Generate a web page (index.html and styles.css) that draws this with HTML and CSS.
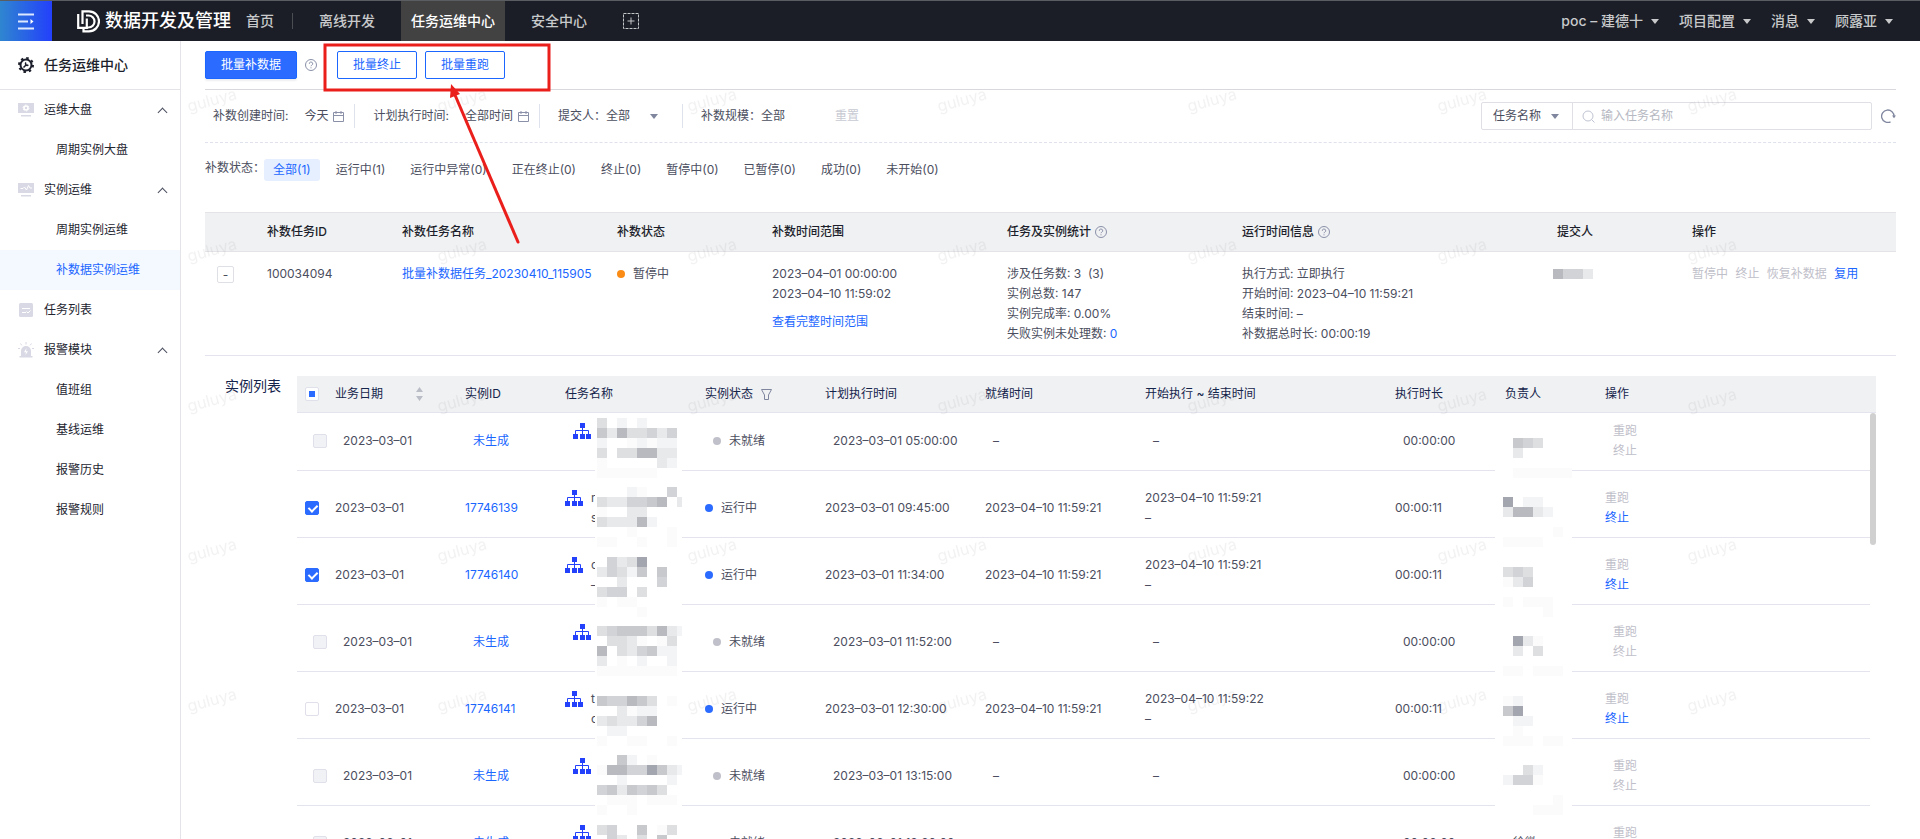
FILE: index.html
```html
<!DOCTYPE html>
<html lang="zh-CN">

<head>
    <meta charset="utf-8">
    <title>任务运维中心</title>
    <link rel="stylesheet" href="styles.css">
</head>

<body>
    <header class="topbar">
        <button class="menu-toggle" aria-label="菜单">
            <svg width="16" height="17" viewBox="0 0 16 17" stroke="#dbe8ff" stroke-width="2">
                <path d="M0 1.5h16M0 8.500h10M0 15.500h16" />
                <path d="M12.500 6l3 2.500-3 2.500z" fill="#fff" stroke="none" />
            </svg>
        </button>
        <div class="brand">
            <svg width="23" height="23" viewBox="0 0 23 23" fill="none" stroke="#fff" stroke-width="2.200">
                <path d="M1.200 4v13.800h8.600V8.500" />
                <path d="M5.500 14V1.300h6.500a10 10 0 0 1 0 20H6.500v-3.500" />
                <path d="M9 5.500h2.500a6 6 0 0 1 0 12H9.500" />
            </svg>
            <span>数据开发及管理</span>
        </div>
        <nav class="topnav">
            <a href="#" class="home">首页</a>
            <a href="#">离线开发</a>
            <a href="#" class="active">任务运维中心</a>
            <a href="#">安全中心</a>
            <button class="add-tab" aria-label="添加">
                <svg width="16" height="16" viewBox="0 0 16 16" fill="none" stroke="#c5c6c8">
                    <rect x="0.500" y="0.500" width="15" height="15" stroke-dasharray="3 1" />
                    <path d="M8 4.500v7M4.500 8h7" />
                </svg>
            </button>
        </nav>
        <div class="user-menu">
            <button>poc – 建德十<i class="caret"></i></button>
            <button>项目配置<i class="caret"></i></button>
            <button>消息<i class="caret"></i></button>
            <button>顾露亚<i class="caret"></i></button>
        </div>
    </header>

    <div class="layout">
        <aside class="sidebar">
            <h1 class="side-title">
                <svg width="16" height="16" viewBox="0 0 16 16" fill="none" stroke="#1c1f2b">
                    <circle cx="8" cy="8" r="5.500" stroke-width="2" />
                    <circle cx="8" cy="8" r="7" stroke-width="2" stroke-dasharray="2.500 3" />
                    <path d="M5.500 10.500l2.500-2.500M8 5.500a1.600 1.600 0 1 0 2.300 2.300" stroke-width="1.500" />
                </svg>
                任务运维中心
            </h1>
            <nav class="side-nav">
                <a href="#" class="group">
                    <svg width="16" height="14" viewBox="0 0 16 14" fill="#d8d9e4">
                        <path d="M0 0h16v10H0zM3 12h10v1.500H3z" />
                        <circle cx="8" cy="5" r="2" fill="none" stroke="#fff" stroke-width="1.600" />
                        <circle cx="8" cy="5" r="3" fill="none" stroke="#fff" stroke-dasharray="1.600 1.540" />
                    </svg>
                    <span>运维大盘</span>
                    <i class="chevron"></i>
                </a>
                <a href="#" class="sub">周期实例大盘</a>
                <a href="#" class="group">
                    <svg width="16" height="14" viewBox="0 0 16 14" fill="#d8d9e4">
                        <path d="M0 0h16v10H0zM3 12h10v1.500H3z" />
                        <path d="M2.500 5.500H5l1.500-1.500 2 3 2-4.500L12 5h2" fill="none" stroke="#fff" />
                    </svg>
                    <span>实例运维</span>
                    <i class="chevron"></i>
                </a>
                <a href="#" class="sub">周期实例运维</a>
                <a href="#" class="sub current">补数据实例运维</a>
                <a href="#" class="group">
                    <svg width="16" height="14" viewBox="0 0 16 14" fill="#d8d9e4">
                        <rect x="1" width="14" height="14" rx="1.500" />
                        <path d="M4 5.500h8M4 9.500h4M8.500 8.500l1.500 1.500 2.500-2.500" fill="none" stroke="#fff" />
                    </svg>
                    <span>任务列表</span>
                </a>
                <a href="#" class="group">
                    <svg width="16" height="16" viewBox="0 0 16 16" fill="#d8d9e4">
                        <path d="M3 14V9a5 5 0 0 1 10 0v5h1.500v1.500h-13V14z" />
                        <path d="M8 0v2.500M2.500 1.500l1.300 1.800M13.500 1.500l-1.300 1.800M0 6.500h2M14 6.500h2" stroke="#d8d9e4" />
                        <path d="M8.500 6L6 10.200h2L7.500 13 10 9.200H8z" fill="#fff" />
                    </svg>
                    <span>报警模块</span>
                    <i class="chevron"></i>
                </a>
                <a href="#" class="sub">值班组</a>
                <a href="#" class="sub">基线运维</a>
                <a href="#" class="sub">报警历史</a>
                <a href="#" class="sub">报警规则</a>
            </nav>
        </aside>

        <main class="content">
            <div class="toolbar">
                <button class="btn primary">批量补数据</button>
                <svg class="help" width="12" height="12" viewBox="0 0 12 12">
                    <use href="#icon-help" />
                </svg>
                <button class="btn">批量终止</button>
                <button class="btn">批量重跑</button>
            </div>

            <div class="filters">
                <div class="filter">
                    <span>补数创建时间:</span>
                    <button class="date">今天 <svg width="11" height="11" viewBox="0 0 11 11"><use href="#icon-calendar" /></svg></button>
                </div>
                <div class="filter">
                    <span>计划执行时间:</span>
                    <button class="date">全部时间 <svg width="11" height="11" viewBox="0 0 11 11"><use href="#icon-calendar" /></svg></button>
                </div>
                <div class="filter submitter">
                    <label for="submitter">提交人：</label>
                    <select id="submitter">
                        <option>全部</option>
                    </select>
                    <i class="caret"></i>
                </div>
                <div class="filter scale">
                    <label for="scale">补数规模：</label>
                    <select id="scale">
                        <option>全部</option>
                    </select>
                </div>
                <button class="reset" disabled>重置</button>
                <div class="search">
                    <select aria-label="搜索类型">
                        <option>任务名称</option>
                    </select>
                    <i class="caret"></i>
                    <svg width="13" height="13" viewBox="0 0 13 13" fill="none" stroke="#bfc4d2">
                        <circle cx="6" cy="6" r="5" />
                        <path d="M9.500 9.500l3 3" />
                    </svg>
                    <input type="text" placeholder="输入任务名称" aria-label="任务名称">
                </div>
                <button class="refresh" aria-label="刷新">
                    <svg width="15" height="14" viewBox="0 0 15 14" fill="none" stroke="#7f869e">
                        <path d="M9.500 12.800A6.200 6.200 0 1 1 13 7.500" stroke-width="1.300" />
                        <path d="M11 6.500h4L13 9.200z" fill="#7f869e" stroke="none" />
                    </svg>
                </button>
            </div>

            <div class="status-bar">
                <span class="status-label">补数状态：</span>
                <button class="pill selected">全部(1)</button>
                <button class="pill">运行中(1)</button>
                <button class="pill">运行中异常(0)</button>
                <button class="pill">正在终止(0)</button>
                <button class="pill">终止(0)</button>
                <button class="pill">暂停中(0)</button>
                <button class="pill">已暂停(0)</button>
                <button class="pill">成功(0)</button>
                <button class="pill">未开始(0)</button>
            </div>

            <table class="tasks">
                <colgroup>
                    <col class="w-expand"><col class="w-id"><col class="w-name"><col class="w-state"><col class="w-info"><col class="w-info"><col class="w-run"><col class="w-user"><col>
                </colgroup>
                <thead>
                    <tr>
                        <th></th>
                        <th>补数任务ID</th>
                        <th>补数任务名称</th>
                        <th>补数状态</th>
                        <th>补数时间范围</th>
                        <th>任务及实例统计 <svg class="help" width="12" height="12" viewBox="0 0 12 12"><use href="#icon-help" /></svg></th>
                        <th>运行时间信息 <svg class="help" width="12" height="12" viewBox="0 0 12 12"><use href="#icon-help" /></svg></th>
                        <th>提交人</th>
                        <th>操作</th>
                    </tr>
                </thead>
                <tbody>
                    <tr>
                        <td><button class="expand" aria-label="收起">-</button></td>
                        <td>100034094</td>
                        <td><a href="#">批量补数据任务_20230410_115905</a></td>
                        <td><span class="state paused">暂停中</span></td>
                        <td>
                            <div>2023–04–01 00:00:00</div>
                            <div>2023–04–10 11:59:02</div>
                            <a href="#" class="full-range">查看完整时间范围</a>
                        </td>
                        <td>
                            <div>涉及任务数: 3&nbsp; (3)</div>
                            <div>实例总数: 147</div>
                            <div>实例完成率: 0.00%</div>
                            <div>失败实例未处理数: <a href="#">0</a></div>
                        </td>
                        <td>
                            <div>执行方式: 立即执行</div>
                            <div>开始时间: 2023–04–10 11:59:21</div>
                            <div>结束时间: –</div>
                            <div>补数据总时长: 00:00:19</div>
                        </td>
                        <td class="masked" data-mask="6442" data-left="2" data-top="17"></td>
                        <td class="ops">
                            <button disabled>暂停中</button>
                            <button disabled>终止</button>
                            <button disabled>恢复补数据</button>
                            <button>复用</button>
                        </td>
                    </tr>
                </tbody>
            </table>

            <section class="instances">
                <h2>实例列表</h2>
                <div class="instance-list">
                    <table>
                        <colgroup>
                            <col class="w-check"><col class="w-date"><col class="w-inst"><col class="w-task"><col class="w-status"><col class="w-time"><col class="w-time"><col class="w-range"><col class="w-cost"><col class="w-owner"><col>
                        </colgroup>
                        <thead>
                            <tr>
                                <th><input type="checkbox" class="partial" aria-label="全选"></th>
                                <th><span class="sortable">业务日期 <svg width="7" height="14" viewBox="0 0 7 14" fill="#babdc6"><path d="M3.500 0L7 5H0zM3.500 14L7 9H0z" /></svg></span></th>
                                <th>实例ID</th>
                                <th>任务名称</th>
                                <th>实例状态 <svg class="funnel" width="11" height="11" viewBox="0 0 11 11" fill="none" stroke="#7f869e"><path d="M.500.500h10L7.500 6v4.500h-4V6z" /></svg></th>
                                <th>计划执行时间</th>
                                <th>就绪时间</th>
                                <th>开始执行 ~ 结束时间</th>
                                <th>执行时长</th>
                                <th>负责人</th>
                                <th>操作</th>
                            </tr>
                        </thead>
                        <tbody id="rows"></tbody>
                    </table>
                    <div class="scrollbar"><div class="thumb"></div></div>
                </div>
            </section>
        </main>
    </div>

    <!-- watermark -->
    <svg class="watermark">
        <defs>
            <pattern id="mark" width="250" height="150" patternUnits="userSpaceOnUse">
                <text x="8" y="71" transform="rotate(-15 8 71)">guluya</text>
            </pattern>
        </defs>
        <rect width="100%" height="100%" fill="url(#mark)" />
    </svg>

    <!-- callout on the two new buttons -->
    <svg class="callout" width="230" height="202" viewBox="0 0 230 202">
        <rect x="2" y="2" width="224" height="45" fill="none" stroke="#ea1f1c" stroke-width="3" />
        <path d="M195 199L132 52" stroke="#ea1f1c" stroke-width="3" stroke-linecap="round" />
        <path d="M128 41l-1 14 10-4z" fill="#ea1f1c" />
    </svg>

    <svg class="sprite" width="0" height="0">
        <symbol id="icon-help" viewBox="0 0 12 12">
            <circle cx="6" cy="6" r="5.500" fill="none" stroke="#8a90a8" />
            <path d="M4.300 4.800a1.700 1.700 0 1 1 2.500 1.400c-.6.3-.8.500-.8 1M6 8.300v1" fill="none" stroke="#8a90a8" />
        </symbol>
        <symbol id="icon-calendar" viewBox="0 0 11 11">
            <path d="M.500 1.500h10v9H.500zM.500 4.500h10M3 0v3M8 0v3" fill="none" stroke="#8a90a8" />
        </symbol>
    </svg>

    <script src="script.js"></script>
</body>

</html>
```
FILE: styles.css
```css
* {
    box-sizing: border-box;
}

body {
    margin: 0;
    height: 100vh;
    overflow: hidden;
    display: flex;
    flex-direction: column;
    position: relative;
    font-family: Inter, "Noto Sans CJK SC", sans-serif;
    font-size: 12px;
    line-height: 20px;
    color: #4b4e5e;
    background-color: #fff;
}

button, select, input {
    font: inherit;
    color: inherit;
    background: none;
    border: none;
    padding: 0;
    margin: 0;
    outline: none;
}

button {
    cursor: pointer;
}

select {
    appearance: none;
}

a {
    color: #1a66ff;
    text-decoration: none;
}

svg {
    flex: none;
}

.caret {
    display: inline-block;
    border: 4px solid transparent;
    border-top: 5px solid currentColor;
    border-bottom: none;
}

/* top bar */
.topbar {
    display: flex;
    align-items: stretch;
    flex: none;
    height: 41px;
    border-top: 1px solid #5a5e62;
    background-color: #1b1e26;
    color: #c8c9cb;
    font-size: 14px;
    font-weight: 500;
}

.menu-toggle {
    width: 52px;
    background: linear-gradient(90deg, #2f86d0, #2340fb);
    display: flex;
    align-items: center;
    justify-content: center;
}

.brand {
    display: flex;
    align-items: center;
    gap: 5px;
    margin-left: 25px;
    color: #fff;
    font-size: 18px;
}

.topnav {
    display: flex;
    align-items: center;
    gap: 16px;
    margin-left: 5px;
}

.topnav a {
    padding: 0 10px;
    line-height: 40px;
    color: inherit;
}

.topnav .home {
    position: relative;
    margin-right: 9px;
}

.topnav .home::after {
    content: "";
    position: absolute;
    right: -9px;
    top: 12px;
    height: 16px;
    border-right: 1px solid #4b4d53;
}

.topnav .active {
    background-color: #424242;
    color: #fff;
}

.add-tab {
    display: flex;
    margin-left: 10px;
}

.user-menu {
    display: flex;
    gap: 20px;
    margin-left: auto;
    padding-right: 27px;
}

.user-menu button {
    display: flex;
    align-items: center;
    gap: 8px;
}

/* side bar */
.layout {
    display: flex;
    flex: 1;
    min-height: 0;
}

.sidebar {
    flex: none;
    width: 181px;
    border-right: 1px solid #e4e4e8;
    color: #23252f;
}

.side-title {
    display: flex;
    align-items: center;
    gap: 10px;
    height: 49px;
    margin: 0;
    padding-left: 18px;
    border-bottom: 1px solid #e4e4e8;
    font-size: 14px;
    font-weight: 500;
    color: #1c1f2b;
}

.side-nav a {
    display: flex;
    align-items: center;
    height: 40px;
    color: inherit;
}

.side-nav .group {
    gap: 10px;
    padding: 0 14px 0 18px;
}

.side-nav .sub {
    padding-left: 56px;
}

.side-nav .current {
    background-color: #f4f8ff;
    color: #1a66ff;
}

.chevron {
    width: 7px;
    height: 7px;
    margin: 4px 0 0 auto;
    border: solid #4b4e5e;
    border-width: 1px 0 0 1px;
    transform: rotate(45deg);
}

/* main */
.content {
    flex: 1;
    min-width: 0;
    padding: 0 24px;
    overflow: hidden;
}

.toolbar {
    display: flex;
    align-items: center;
    gap: 8px;
    height: 49px;
    border-bottom: 1px solid #d9d9dd;
}

.btn {
    height: 28px;
    padding: 0 15px;
    border: 1px solid #1a66ff;
    border-radius: 2px;
    color: #1a66ff;
}

.btn.primary {
    background-color: #2b6bff;
    color: #fff;
    box-shadow: 0 2px 2px #eeeef2;
}

.toolbar .help {
    margin-right: 12px;
}

.filters {
    display: flex;
    align-items: center;
    height: 53px;
    border-bottom: 1px dashed #dfe1ec;
}

.filter {
    display: flex;
    align-items: center;
    gap: 16px;
    height: 24px;
    margin-right: 10px;
    padding: 0 10px 0 8px;
    border-right: 1px solid #dfe1ec;
}

.date {
    display: flex;
    align-items: center;
    gap: 5px;
}

.submitter, .scale {
    gap: 0;
}

.submitter {
    padding-right: 24px;
}

.submitter .caret {
    margin-left: 19px;
    border-top-color: #7f869e;
}

.scale {
    border-right: none;
}

.reset {
    margin-left: 29px;
    color: #c8cad3;
}

.search {
    display: flex;
    align-items: center;
    width: 391px;
    height: 28px;
    margin-left: auto;
    padding-left: 11px;
    border: 1px solid #dfe0e6;
    border-radius: 2px;
}

.search .caret {
    margin: 0 13px 0 10px;
    border-top-color: #7f869e;
}

.search select {
    width: 48px;
}

.search svg {
    box-sizing: content-box;
    padding: 7px 6px 7px 9px;
    border-left: 1px solid #dfe0e6;
}

.search input {
    flex: 1;
    min-width: 0;
}

.search input::placeholder {
    color: #b6b8c2;
}

.refresh {
    display: flex;
    margin-left: 9px;
}

.status-bar {
    display: flex;
    align-items: center;
    gap: 7px;
    margin: 15px 0 30px;
}

.status-label {
    margin: 0 -8px 4px 0;
}

.pill {
    height: 22px;
    padding: 0 9px;
    border-radius: 3px;
}

.pill.selected {
    background-color: #e6efff;
    color: #1a66ff;
}

/* tables */
table {
    width: 100%;
    table-layout: fixed;
    border-collapse: separate;
    border-spacing: 0;
}

th, td {
    padding: 0 0 0 8px;
    text-align: left;
}

th {
    background-color: #f0f1f3;
    white-space: nowrap;
}

th svg {
    vertical-align: -2px;
    margin-left: 1px;
}

.tasks th {
    height: 40px;
    border-top: 1px solid #e4e4e8;
    border-bottom: 1px solid #e4e4e8;
    font-weight: 500;
    color: #1c1f2b;
}

.tasks td {
    padding: 12px 0 11px 8px;
    vertical-align: top;
    border-bottom: 1px solid #e3e4ee;
}

.tasks th:first-child, .tasks td:first-child {
    padding-left: 12px;
}

.w-expand { width: 54px; }
.w-id { width: 135px; }
.w-name { width: 215px; }
.w-state { width: 155px; }
.w-info { width: 235px; }
.w-run { width: 315px; }
.w-user { width: 135px; }

.expand {
    display: block;
    width: 17px;
    height: 17px;
    margin-top: 2px;
    border: 1px solid #dfe0e6;
    border-radius: 2px;
    line-height: 13px;
}

.full-range {
    display: block;
    margin-top: 8px;
}

.state::before {
    content: "";
    display: inline-block;
    width: 8px;
    height: 8px;
    margin-right: 8px;
    border-radius: 50%;
    background-color: #bfc0ca;
}

.state.running::before {
    background-color: #2b6bff;
}

.state.paused::before {
    background-color: #fa8c16;
}

.ops button {
    margin-right: 4px;
    color: #1a66ff;
}

.ops button:disabled {
    color: #bfc0ca;
}

/* instance list */
.instances {
    display: flex;
    gap: 16px;
    padding: 20px 20px 0;
}

.instances h2 {
    flex: none;
    margin: 0;
    font-size: 14px;
    font-weight: 400;
    color: #14244b;
}

.instance-list {
    position: relative;
    flex: 1;
    min-width: 0;
}

.instances th {
    height: 37px;
    border-bottom: 1px solid #e3e4ee;
    font-weight: 400;
    color: #14244b;
}

.instances td {
    height: 67px;
    padding: 17px 0 9px 8px;
    border-bottom: 1px solid #e3e4ee;
}

.instances tr:first-child td {
    height: 58px;
    padding-top: 8px;
}

.instances .disabled td {
    padding-left: 16px;
}

.w-check { width: 30px; }
.w-date { width: 130px; }
.w-inst { width: 100px; }
.w-task { width: 140px; }
.w-status { width: 120px; }
.w-time { width: 160px; }
.w-range { width: 250px; }
.w-cost { width: 110px; }
.w-owner { width: 100px; }

.sortable {
    display: flex;
    align-items: center;
    justify-content: space-between;
    padding-right: 34px;
}

.instances .funnel {
    margin-left: 5px;
}

input[type="checkbox"] {
    appearance: none;
    display: block;
    width: 14px;
    height: 14px;
    border: 1px solid #dfe0ea;
    border-radius: 2px;
    background: #fff center no-repeat;
}

input[type="checkbox"]:disabled {
    background-color: #f1f2f5;
}

input[type="checkbox"]:checked {
    border-color: #2b6bff;
    background-color: #2b6bff;
}

input[type="checkbox"]:checked::after {
    content: "";
    display: block;
    width: 4px;
    height: 7px;
    margin: 1px 4px;
    border: solid #fff;
    border-width: 0 2px 2px 0;
    transform: rotate(45deg);
}

input.partial::after {
    content: "";
    display: block;
    width: 6px;
    height: 6px;
    margin: 3px;
    background-color: #2b6bff;
}

.task {
    display: flex;
    gap: 8px;
    height: 40px;
}

.task svg {
    margin-top: 2px;
}

.instances .ops button {
    display: block;
}

/* masked names spill over the row line below them */
.masked {
    position: relative;
}

.mask {
    position: absolute;
    z-index: 1;
}

.scrollbar {
    position: absolute;
    top: 37px;
    right: 0;
    bottom: 0;
    width: 6px;
    background-color: #fff;
}

.thumb {
    height: 132px;
    border-radius: 3px;
    background-color: #d0d0d0;
}

/* overlays */
.watermark {
    position: absolute;
    z-index: 2;
    top: 41px;
    left: 181px;
    width: calc(100% - 181px);
    height: calc(100% - 41px);
    pointer-events: none;
    font-size: 16px;
    fill: rgba(0, 0, 0, 0.05);
}

.callout {
    position: absolute;
    z-index: 3;
    top: 43px;
    left: 323px;
    pointer-events: none;
}

.sprite {
    position: absolute;
}
```
FILE: script.js
```js
// one digit per 10px cell, higher is darker, "." is empty
const shades = ['#fbfbfc', '#f3f4f5', '#e8e9eb', '#dedfe1', '#d2d3d7', '#c8c9cd', '#b9bac0', '#a3a5af'];

const rows = [
    { time: '05:00:00', top: 14, name: ['3.1.1...', '52633424', '1..01011', '3.336622', '0.....21', '000000'],
      owner: ['', '', '543', '2', '', '0000000'], ownerLeft: 10 },
    { id: '17746139', checked: true, time: '09:45:00', end: '11:59:21', top: 16, letters: ['r', 's'],
      name: ['...10..4', '3224456.2', '0..22', '322261', '...0...0', '00..0..0'],
      owner: ['', '7.11', '26621', '', '.....0', '0000'] },
    { id: '17746140', checked: true, time: '11:34:00', end: '11:59:21', top: 19, letters: ['c', '–'],
      name: ['.4237', '24315.5', '..2...4', '344.3', '0.00', '....0'],
      owner: ['', '343', '024', '', '0.000', '....0'] },
    { time: '11:52:00', top: 21, name: ['345553621', '.3320.03', '6.324511', '2.0.1..1', '00000000'],
      owner: ['', '.720', '.2.3', '', '00.000'] },
    { id: '17746141', time: '12:30:00', end: '11:59:22', top: 24, letters: ['t', 'c'],
      name: ['544653.0', '..2011', '232246', '.11', '0..00..0'],
      owner: ['01', '57', '.11', '.0', '000.00'] },
    { time: '13:15:00', top: 16, name: ['..51.0', '066447521', '..1....1', '4525453', '.000.000', '0..0'],
      owner: ['', '..31', '1440', '', '.....0', '...000'] },
    { time: '13:20:00', top: 19, name: ['34..5.03', '.42.3.5'], ownerName: '徐微' },
];

function drawMask(lines, left, top, width, indent = 2) {
    let cells = '';
    lines.forEach((line, y) => {
        [...line].forEach((level, x) => {
            if (level !== '.') {
                cells += `<rect x="${x * 10 + indent}" y="${y * 10}" width="10" height="10" fill="${shades[level]}"/>`;
            }
        });
    });
    const height = lines.length * 10;
    return `<svg class="mask" style="left:${left}px;top:${top}px" width="${width}" height="${height}">
        <rect width="100%" height="100%" fill="#fff"/>${cells}</svg>`;
}

const treeIcon = `<svg width="18" height="16" viewBox="0 0 18 16" fill="#2340fb">
    <path d="M7 0h5v5H7zM0 11h5v5H0zM7 11h5v5H7zM13 11h5v5h-5z"/>
    <path d="M9.500 5v6M2.500 11V7.500h13V11" fill="none" stroke="#2340fb"/></svg>`;

function rowHtml(row, i) {
    const running = Boolean(row.id);
    // the first row sits 9px higher, under the table head
    const top = row.top - (i === 0 ? 9 : 0);
    const owner = row.owner ? drawMask(row.owner, -2, top, 77, 8 + (row.ownerLeft || 0)) : '';
    const letters = row.letters ? `<div>${row.letters[0]}<br>${row.letters[1]}</div>` : '';
    return `<tr class="${running ? '' : 'disabled'}">
        <td><input type="checkbox" aria-label="选择" ${row.checked ? 'checked' : ''} ${running ? '' : 'disabled'}></td>
        <td>2023–03–01</td>
        <td><a href="#">${row.id || '未生成'}</a></td>
        <td class="masked"><div class="task">${treeIcon}${letters}</div>${drawMask(row.name, 38, top, 87)}</td>
        <td><span class="state ${running ? 'running' : ''}">${running ? '运行中' : '未就绪'}</span></td>
        <td>2023–03–01 ${row.time}</td>
        <td>${running ? '2023–04–10 11:59:21' : '–'}</td>
        <td>${running ? `2023–04–10 ${row.end}<br>–` : '–'}</td>
        <td>${running ? '00:00:11' : '00:00:00'}</td>
        <td class="masked">${row.ownerName || ''}${owner}</td>
        <td class="ops"><button disabled>重跑</button><button ${running ? '' : 'disabled'}>终止</button></td>
    </tr>`;
}

document.getElementById('rows').innerHTML = rows.map(rowHtml).join('');

document.querySelectorAll('[data-mask]').forEach(cell => {
    cell.innerHTML = drawMask([cell.dataset.mask], cell.dataset.left, cell.dataset.top, 44);
});
```
